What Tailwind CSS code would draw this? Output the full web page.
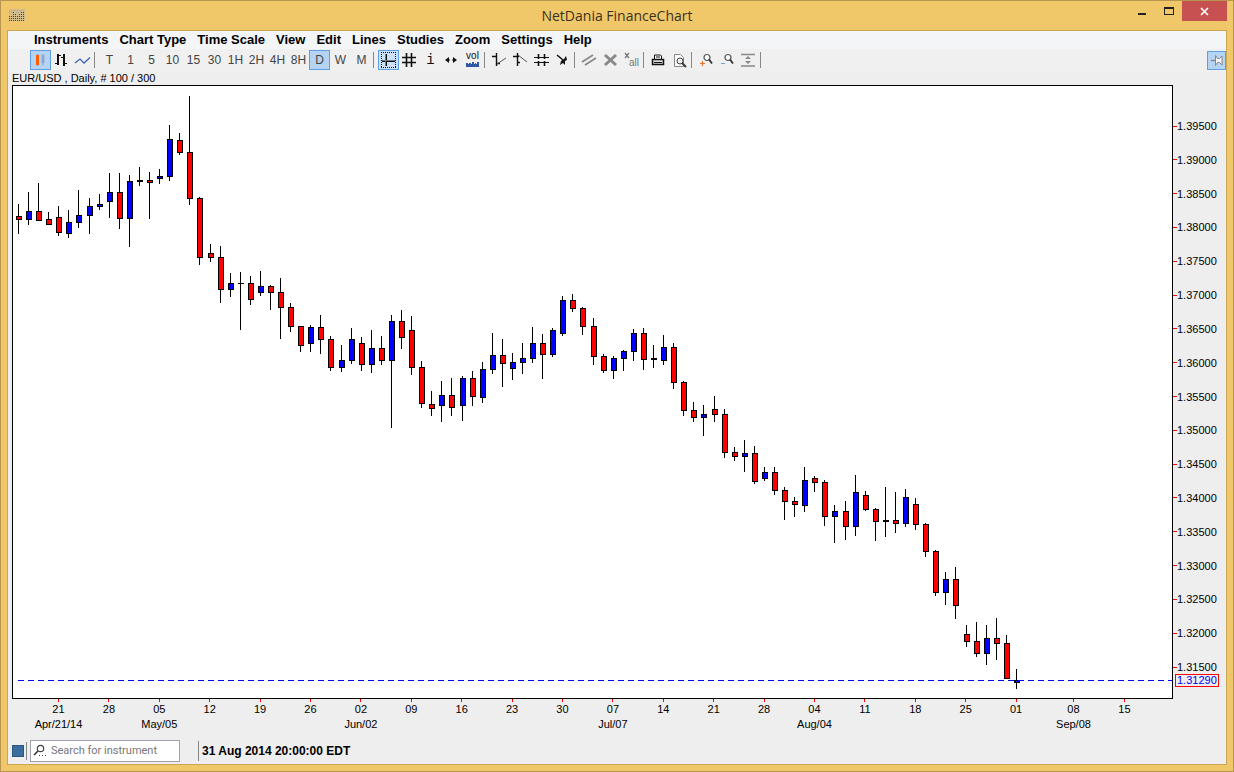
<!DOCTYPE html>
<html lang="en">
  <head>
    <meta charset="UTF-8" />
    <meta name="viewport" content="width=device-width, initial-scale=1.0" />
    <script src="https://cdn.jsdelivr.net/npm/@tailwindcss/browser@4"></script>
    <title>NetDania FinanceChart</title>
  </head>
  <body
    class="h-screen flex flex-col bg-[#f0c869] border border-[#b8964f] px-[6px] pb-[6px] font-['Liberation_Sans',Arial,sans-serif] text-black overflow-hidden"
  >
    <!-- title bar -->
    <header class="relative h-[29px] shrink-0 flex items-start justify-between">
      <svg class="w-4 h-3 mt-2 ml-[2px]" viewBox="0 0 16 12" shape-rendering="crispEdges">
        <path d="M0 0h16v12H0z" fill="#d3bd8a" />
        <g stroke="#444" stroke-dasharray="1 1">
          <path d="M0 11.5h16M0 9.5h16M0 7.5h16" />
          <path d="M4 5.5h4M10 5.5h6M4 3.5h2M12 3.5h4" />
        </g>
        <path d="M0 1.5h16M0 3.5h3M7 3.5h4" stroke="#b5aa90" stroke-dasharray="1 1" />
      </svg>
      <h1
        class="absolute inset-0 flex items-center justify-center text-sm text-[#3b3222] font-['Open_Sans','Noto_Sans',sans-serif] pointer-events-none"
      >
        NetDania FinanceChart
      </h1>
      <div class="flex items-start">
        <button type="button" aria-label="Minimize" class="w-7 h-5 flex justify-center pt-3">
          <span class="w-2 h-[2px] bg-[#222]"></span>
        </button>
        <button type="button" aria-label="Maximize" class="w-[26px] h-5 flex justify-center pt-[6px]">
          <span class="w-[10px] h-2 border border-t-2 border-[#222]"></span>
        </button>
        <button type="button" aria-label="Close" class="w-[45px] h-5 bg-[#c75050] flex items-center justify-center">
          <svg class="w-[9px] h-[9px]" viewBox="0 0 9 9">
            <path d="M1 1l7 7M8 1l-7 7" stroke="#fff" stroke-width="1.6" />
          </svg>
        </button>
      </div>
    </header>

    <main class="flex-1 min-h-0 flex flex-col border border-[#cba655] bg-[#eeeeee]">
      <!-- menu -->
      <nav class="h-[18px] shrink-0 flex items-center gap-[11px] pl-[26px] bg-[#f4f5f7] text-[13px] font-bold whitespace-nowrap">
        <a href="#">Instruments</a>
        <a href="#">Chart Type</a>
        <a href="#">Time Scale</a>
        <a href="#">View</a>
        <a href="#">Edit</a>
        <a href="#">Lines</a>
        <a href="#">Studies</a>
        <a href="#">Zoom</a>
        <a href="#">Settings</a>
        <a href="#">Help</a>
      </nav>

      <!-- toolbar -->
      <div class="h-[22px] shrink-0 flex items-center justify-between pl-[22px] bg-[#f0f0f0] text-xs text-[#444]">
        <div class="flex items-center">
          <button type="button" aria-label="Candles" class="w-[21px] h-5 bg-[#b5d4f3] border border-[#5e9fe3]">
            <svg class="w-[19px] h-[18px]" viewBox="1 1 19 18">
              <path d="M7.5 4v12" stroke="#ff6a13" />
              <path d="M6 5h3v10H6z" fill="#ff5f00" />
              <path d="M13 4v11" stroke="#7d9bc4" />
              <path d="M11.5 5h3v8h-3z" fill="#8ea9cf" />
            </svg>
          </button>
          <button type="button" aria-label="Bars" class="w-[21px] h-5">
            <svg class="w-[21px] h-5" viewBox="0 0 21 20" shape-rendering="crispEdges">
              <path d="M7 4v11M13 4v12" stroke="#111" stroke-width="2" />
              <path d="M4 13.5h3M8 5.5h2M10 7.5h3M14 13.5h2" stroke="#111" />
            </svg>
          </button>
          <button type="button" aria-label="Line" class="w-[21px] h-5">
            <svg class="w-[21px] h-5" viewBox="0 0 21 20">
              <path d="M3 13l5-4 4 4 6-5.500" fill="none" stroke="#3c63b8" stroke-width="1.3" />
            </svg>
          </button>
          <span class="w-[6px] flex"><i class="ml-px w-px h-4 bg-[#888]"></i></span>
          <button type="button" class="w-[21px] h-5">T</button>
          <button type="button" class="w-[21px] h-5">1</button>
          <button type="button" class="w-[21px] h-5">5</button>
          <button type="button" class="w-[21px] h-5">10</button>
          <button type="button" class="w-[21px] h-5">15</button>
          <button type="button" class="w-[21px] h-5">30</button>
          <button type="button" class="w-[21px] h-5">1H</button>
          <button type="button" class="w-[21px] h-5">2H</button>
          <button type="button" class="w-[21px] h-5">4H</button>
          <button type="button" class="w-[21px] h-5">8H</button>
          <button type="button" class="w-[21px] h-5 bg-[#b5d4f3] border border-[#5e9fe3]">D</button>
          <button type="button" class="w-[21px] h-5">W</button>
          <button type="button" class="w-[21px] h-5">M</button>
          <span class="w-[6px] flex"><i class="ml-px w-px h-4 bg-[#888]"></i></span>
          <button type="button" aria-label="Crosshair" class="w-[21px] h-5 bg-[#cbe1f8] border border-[#5e9fe3]">
            <svg class="w-[19px] h-[18px]" viewBox="1 1 19 18" shape-rendering="crispEdges">
              <path d="M3 2.500h15M3 17.500h15M3.500 2v16M17.500 2v16" stroke="#111" stroke-dasharray="1 1" />
              <path d="M8.500 4v12M4 11.500h13" stroke="#111" />
              <path d="M7.500 4v12M4 10.500h13" stroke="#6f7f90" />
            </svg>
          </button>
          <button type="button" aria-label="Grid" class="w-[21px] h-5">
            <svg class="w-[21px] h-5" viewBox="0 0 21 20">
              <path d="M7.500 3v14M12.500 3v14M3 7.500h14M3 12.500h14" stroke="#111" stroke-width="1.600" />
            </svg>
          </button>
          <button type="button" class="w-[21px] h-5 text-sm leading-5 text-[#111] font-['Liberation_Mono',monospace]">i</button>
          <button type="button" aria-label="Scroll" class="w-[21px] h-5">
            <svg class="w-[21px] h-5" viewBox="0 0 21 20">
              <path d="M4 10l4-3v6zM16 10l-4-3v6z" fill="#111" />
              <path d="M7 10h2M11 10h2" stroke="#111" />
            </svg>
          </button>
          <button type="button" class="w-[21px] h-5 flex flex-col items-center">
            <span class="text-[10px] leading-3 text-[#111]">vol</span>
            <svg class="w-[13px] h-[5px]" viewBox="0 0 13 5" shape-rendering="crispEdges">
              <path d="M0 1h2v1h1V1h2v1h1V0h2v2h1V1h1v1h1V0h2v5H0z" fill="#2f57a8" />
            </svg>
          </button>
          <span class="w-[6px] flex"><i class="ml-px w-px h-4 bg-[#888]"></i></span>
          <button type="button" aria-label="Support line" class="w-[21px] h-5">
            <svg class="w-[21px] h-5" viewBox="0 0 21 20">
              <path d="M7.500 3v13M3 6.500h4M8 13.500h3" stroke="#111" stroke-width="1.400" />
              <path d="M8 14l9-6" stroke="#555" />
            </svg>
          </button>
          <button type="button" aria-label="Resistance line" class="w-[21px] h-5">
            <svg class="w-[21px] h-5" viewBox="0 0 21 20">
              <path d="M7.500 3v13M3 6.500h6M8 12.500h2" stroke="#111" stroke-width="1.400" />
              <path d="M8 5l9 7" stroke="#555" />
            </svg>
          </button>
          <button type="button" aria-label="Channel" class="w-[21px] h-5">
            <svg class="w-[21px] h-5" viewBox="0 0 21 20">
              <path d="M7.500 4v5M7.500 11v5M13.500 4v5M13.500 11v5" stroke="#111" stroke-width="1.600" />
              <path d="M3 7.500h15M3 12.500h15" stroke="#111" />
            </svg>
          </button>
          <button type="button" aria-label="Arrow" class="w-[21px] h-5">
            <svg class="w-[21px] h-5" viewBox="0 0 21 20">
              <path d="M5 5l6 5" stroke="#111" stroke-width="1.500" />
              <path d="M14 6l1 4-2 1v4l-2-2-3 2 1-4 3-2z" fill="#111" />
            </svg>
          </button>
          <span class="w-[6px] flex"><i class="ml-px w-px h-4 bg-[#888]"></i></span>
          <button type="button" aria-label="Parallel lines" class="w-[21px] h-5">
            <svg class="w-[21px] h-5" viewBox="0 0 21 20">
              <path d="M3 12l11-7M6 15l11-7" stroke="#888" stroke-width="1.800" />
            </svg>
          </button>
          <button type="button" aria-label="Delete" class="w-[21px] h-5">
            <svg class="w-[21px] h-5" viewBox="0 0 21 20">
              <path d="M5 5l11 10M16 5L5 15" stroke="#888" stroke-width="3" />
            </svg>
          </button>
          <button type="button" aria-label="Delete all" class="w-[21px] h-5">
            <svg class="w-[21px] h-5" viewBox="0 0 21 20">
              <path d="M4 3l4 5M8 3L4 8" stroke="#777" stroke-width="1.300" />
              <text x="8" y="16" font-size="10" fill="#777">all</text>
            </svg>
          </button>
          <span class="w-[6px] flex"><i class="ml-px w-px h-4 bg-[#888]"></i></span>
          <button type="button" aria-label="Print" class="w-[21px] h-5">
            <svg class="w-[21px] h-5" viewBox="0 0 21 20">
              <path d="M6.500 9V5h6l1 1v3" fill="#fff" stroke="#111" />
              <path d="M4.500 9.500h11v5h-11z" fill="#ddd" stroke="#111" stroke-width="1.500" />
              <path d="M6 12.500h8M8 7h4" stroke="#111" />
            </svg>
          </button>
          <button type="button" aria-label="Print preview" class="w-[21px] h-5">
            <svg class="w-[21px] h-5" viewBox="0 0 21 20">
              <path d="M5.500 4.500h6l3 3v9h-9z" fill="#fafafa" stroke="#888" />
              <circle cx="11" cy="11" r="3" fill="#eee" stroke="#444" />
              <path d="M13 13l4 4" stroke="#333" stroke-width="1.800" />
            </svg>
          </button>
          <span class="w-[6px] flex"><i class="ml-px w-px h-4 bg-[#888]"></i></span>
          <button type="button" aria-label="Zoom in" class="w-[21px] h-5">
            <svg class="w-[21px] h-5" viewBox="0 0 21 20">
              <circle cx="11" cy="7.500" r="3" fill="#fafafa" stroke="#555" stroke-width="1.200" />
              <path d="M13 9.500l3 4" stroke="#333" stroke-width="1.800" />
              <path d="M4 13.500h5M6.500 11v5" stroke="#f36a2a" />
            </svg>
          </button>
          <button type="button" aria-label="Zoom out" class="w-[21px] h-5">
            <svg class="w-[21px] h-5" viewBox="0 0 21 20">
              <circle cx="11" cy="7.500" r="3" fill="#fafafa" stroke="#555" stroke-width="1.200" />
              <path d="M13 9.500l3 4" stroke="#333" stroke-width="1.800" />
              <path d="M4 13.500h4" stroke="#7aa2dc" />
            </svg>
          </button>
          <button type="button" aria-label="Fit height" class="w-[21px] h-5">
            <svg class="w-[21px] h-5" viewBox="0 0 21 20">
              <path d="M3 4.500h14M3 16h14" stroke="#888" stroke-width="1.600" />
              <path d="M10 6l3 3H7zM10 14l3-3H7z" fill="#888" />
            </svg>
          </button>
          <span class="w-[6px] flex"><i class="ml-px w-px h-4 bg-[#888]"></i></span>
        </div>
        <button type="button" aria-label="Pin" class="w-[19px] h-[19px] bg-[#b5d4f3] border border-[#5e9fe3]">
          <svg class="w-[17px] h-[17px]" viewBox="0 0 17 17">
            <path d="M3 8.500h4" stroke="#888" stroke-width="1.400" />
            <path d="M7.500 3.500v10l2-3h2l2.500 2.500v-9l-2.500 2.500h-2z" fill="#f6f6f6" stroke="#888" />
          </svg>
        </button>
      </div>

      <p class="h-[14px] shrink-0 pl-1 text-[11px] leading-[14px]">EUR/USD , Daily, # 100 / 300</p>

      <!-- chart -->
      <section class="flex-1 min-h-0 flex pl-1">
        <div class="flex-1 min-w-0 border border-black bg-white">
          <svg
            id="plot"
            class="block w-full h-full"
            viewBox="13 86 1159 612"
            preserveAspectRatio="none"
            shape-rendering="crispEdges"
          ></svg>
        </div>
        <div class="relative w-[53px] flex flex-col justify-between pt-[35px] pb-[26px] text-[11px] leading-3">
          <div id="prices" class="contents"></div>
          <span
            class="absolute left-[2px] top-[96%] h-[13px] px-px border border-[#ff0000] leading-[11px] text-[#0000ff]"
            >1.31290</span
          >
        </div>
      </section>
      <div
        id="dates"
        class="h-[34px] shrink-0 ml-1 mr-[53px] grid grid-cols-[213fr_repeat(20,504fr)_644fr_376fr_297fr] text-[11px] leading-[15px] whitespace-nowrap"
      ></div>

      <!-- status bar -->
      <footer class="h-[31px] shrink-0 flex items-center pt-[5px] pl-1">
        <span class="w-3 h-3 bg-[#3b6ea0] border border-[#2c567f]"></span>
        <span class="ml-[2px] w-px h-[18px] bg-[#888]"></span>
        <label class="ml-[3px] w-[150px] h-[22px] flex items-center bg-white border border-[#a0a3ab]">
          <svg class="w-4 h-4 ml-[2px] shrink-0" viewBox="0 0 16 16">
            <circle cx="7.500" cy="5.500" r="3.200" fill="none" stroke="#444" stroke-width="1.200" />
            <path d="M5 8l-4 4" stroke="#333" stroke-width="1.600" />
            <path d="M6 12.500h1M9 12.500h1M12 12.500h1" stroke="#444" />
          </svg>
          <input
            type="text"
            aria-label="Search for instrument"
            placeholder="Search for instrument"
            class="ml-[2px] min-w-0 flex-1 outline-none text-[11px] font-[Roboto,'Noto_Sans',sans-serif] placeholder:text-[#777]"
          />
        </label>
        <span class="ml-[18px] w-px h-5 bg-[#888]"></span>
        <p class="ml-[3px] text-xs font-bold">31 Aug 2014 20:00:00 EDT</p>
      </footer>
    </main>

    <script>
      // [high, body top, body bottom, low, colour]
      const candles = [
        [204, 216, 220, 234, "r"], [192, 211, 220, 225, "b"], [183, 211, 221, 221, "r"], [212, 219, 225, 225, "r"],
        [206, 217, 233, 236, "r"], [210, 222, 234, 238, "b"], [190, 215, 223, 228, "b"], [198, 206, 216, 234, "b"],
        [194, 204, 207, 210, "b"], [173, 192, 202, 218, "b"], [173, 192, 219, 229, "r"], [175, 181, 219, 247, "b"],
        [167, 180, 182, 186, "b"], [172, 180, 183, 219, "r"], [169, 176, 179, 184, "b"], [125, 139, 177, 181, "b"],
        [133, 140, 153, 155, "r"], [96, 152, 199, 205, "r"], [197, 198, 258, 265, "r"], [244, 253, 258, 262, "r"],
        [246, 257, 290, 303, "r"], [273, 283, 290, 297, "b"], [272, 283, 284, 330, "b"], [276, 283, 300, 305, "r"],
        [271, 286, 293, 296, "b"], [285, 286, 293, 310, "r"], [278, 292, 308, 339, "r"], [303, 307, 327, 332, "r"],
        [326, 326, 346, 352, "r"], [325, 327, 344, 352, "b"], [315, 327, 340, 354, "r"], [336, 339, 368, 371, "r"],
        [345, 360, 368, 372, "b"], [328, 339, 361, 364, "b"], [337, 343, 365, 371, "r"], [330, 348, 365, 373, "b"],
        [336, 348, 361, 365, "r"], [315, 321, 361, 428, "b"], [310, 321, 338, 349, "r"], [316, 330, 368, 375, "r"],
        [361, 367, 404, 408, "r"], [391, 404, 409, 416, "r"], [381, 395, 406, 422, "b"], [378, 395, 408, 416, "r"],
        [376, 378, 406, 421, "b"], [371, 378, 397, 406, "r"], [362, 369, 398, 403, "b"], [333, 355, 370, 374, "b"],
        [339, 355, 364, 387, "r"], [353, 362, 369, 380, "b"], [343, 358, 363, 374, "b"], [327, 343, 359, 363, "b"],
        [334, 343, 355, 379, "r"], [328, 330, 355, 357, "b"], [296, 300, 334, 336, "b"], [294, 300, 309, 312, "r"],
        [307, 308, 327, 335, "r"], [318, 326, 357, 365, "r"], [354, 356, 371, 373, "r"], [356, 358, 371, 379, "b"],
        [350, 351, 359, 371, "b"], [329, 333, 352, 361, "b"], [328, 333, 360, 370, "r"], [345, 358, 360, 368, "b"],
        [335, 347, 361, 365, "b"], [343, 347, 383, 389, "r"], [381, 382, 411, 416, "r"], [402, 410, 418, 422, "r"],
        [405, 414, 418, 436, "b"], [396, 409, 415, 422, "r"], [409, 414, 453, 458, "r"], [447, 452, 457, 461, "r"],
        [440, 453, 457, 472, "b"], [446, 453, 482, 484, "r"], [467, 472, 479, 481, "b"], [467, 472, 491, 495, "r"],
        [487, 490, 502, 520, "r"], [497, 501, 505, 517, "r"], [467, 480, 506, 512, "b"], [476, 478, 483, 492, "r"],
        [480, 482, 517, 526, "r"], [505, 511, 517, 543, "b"], [501, 511, 527, 540, "r"], [475, 492, 527, 536, "b"],
        [491, 495, 510, 511, "r"], [508, 509, 522, 541, "r"], [487, 520, 522, 537, "b"], [492, 520, 524, 533, "r"],
        [489, 497, 524, 527, "b"], [498, 504, 525, 530, "r"], [523, 524, 552, 557, "r"], [550, 551, 593, 596, "r"],
        [572, 579, 593, 605, "b"], [567, 579, 606, 619, "r"], [625, 634, 642, 647, "r"], [622, 641, 654, 657, "r"],
        [625, 638, 654, 665, "b"], [618, 638, 644, 660, "r"], [635, 643, 679, 679, "r"], [669, 680, 683, 689, "b"],
      ];

      let svg = "";
      candles.forEach(([high, top, bottom, low, c], i) => {
        const x = 18 + Math.round(i * 10.08);
        const fill = c === "r" ? "#ff0000" : "#0000ff";
        svg += `<rect x="${x}" y="${high}" width="1" height="${low - high}" fill="#000" />`;
        svg += `<rect x="${x - 2}" y="${top}" width="6" height="${bottom - top}" fill="#000" />`;
        if (bottom - top > 2) {
          svg += `<rect x="${x - 1}" y="${top + 1}" width="4" height="${bottom - top - 2}" fill="${fill}" />`;
        }
      });
      // last price
      for (let x = 18; x < 1172; x += 10) {
        svg += `<rect x="${x}" y="680" width="6" height="1" fill="#0000ff" />`;
      }
      document.getElementById("plot").innerHTML = svg;

      let prices = "";
      for (let p = 139500; p >= 131500; p -= 500) {
        prices += `<span class="flex items-center h-3"><i class="w-1 h-px bg-[#f00]"></i>${(p / 100000).toFixed(5)}</span>`;
      }
      document.getElementById("prices").innerHTML = prices;

      const days = "21 28 05 12 19 26 02 09 16 23 30 07 14 21 28 04 11 18 25 01 08 15".split(" ");
      const months = { 0: "Apr/21/14", 2: "May/05", 6: "Jun/02", 11: "Jul/07", 15: "Aug/04", 20: "Sep/08" };
      let dates = "<span></span>";
      days.forEach((d, i) => {
        dates += `<div class="min-w-0 flex flex-col items-center"><i class="w-px h-[3px] bg-[#f00]"></i><span>${d}</span><span>${months[i] || ""}</span></div>`;
      });
      document.getElementById("dates").innerHTML = dates;
    </script>
  </body>
</html>
